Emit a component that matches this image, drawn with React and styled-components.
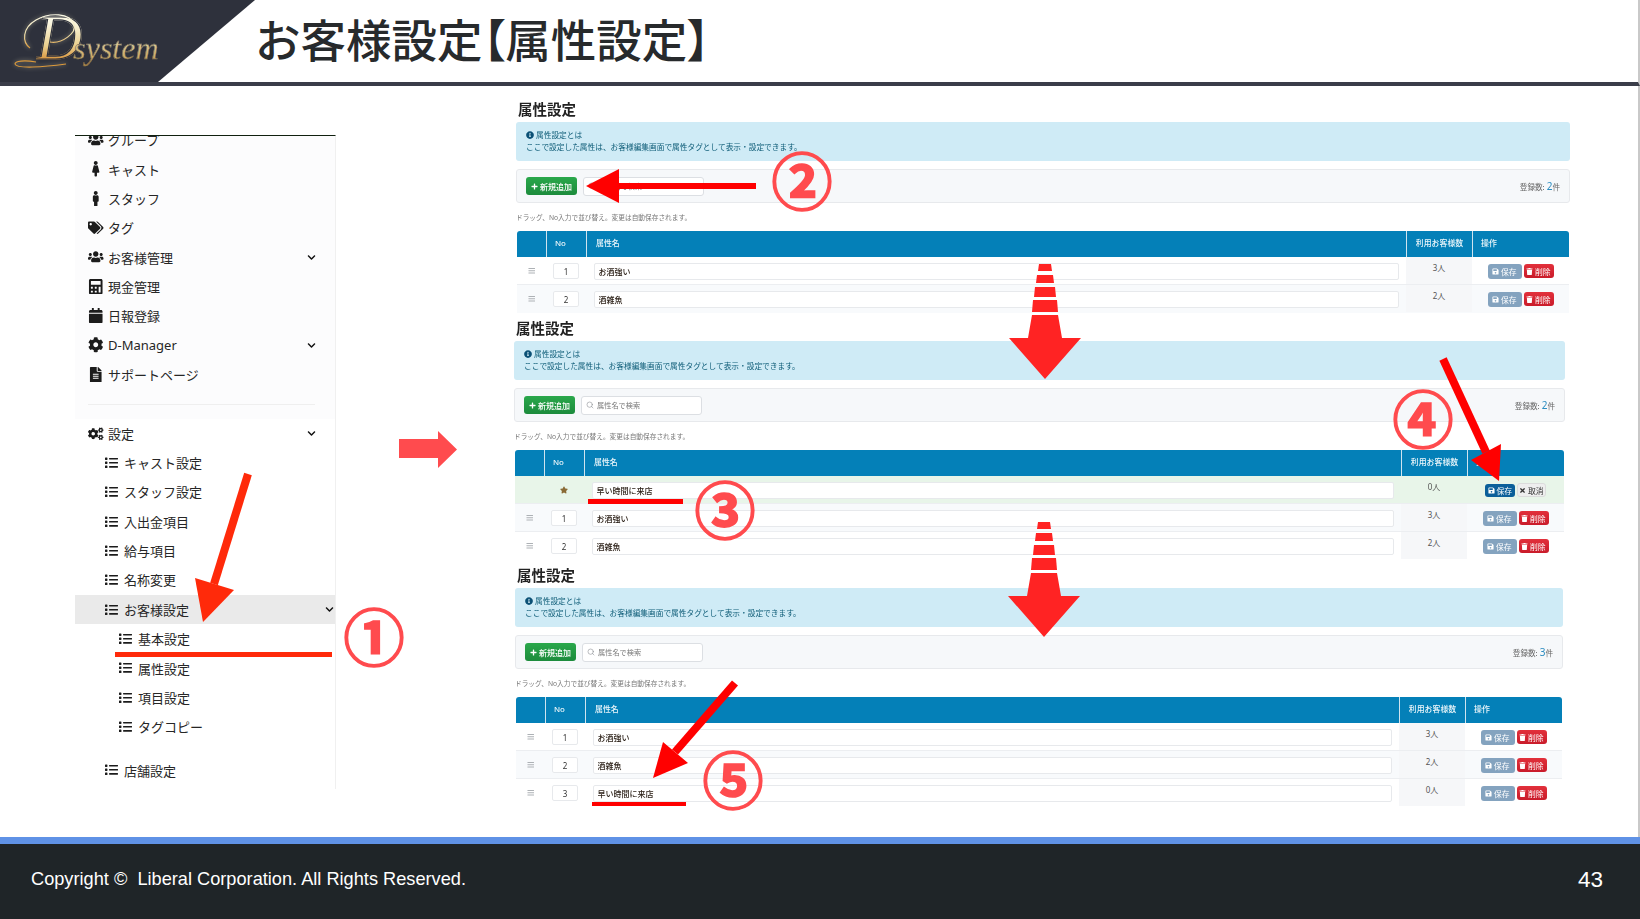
import React from "react";
import styled, { createGlobalStyle } from "styled-components";
import { Search } from "lucide-react";
import {
  FaUsers,
  FaFemale,
  FaMale,
  FaTags,
  FaCalculator,
  FaCalendar,
  FaCog,
  FaCogs,
  FaFileAlt,
  FaList,
  FaChevronDown,
  FaInfoCircle,
  FaPlus,
  FaSave,
  FaTrash,
  FaTimes,
  FaStar,
  FaBars,
} from "react-icons/fa";

const GlobalStyle = createGlobalStyle`
  html, body {
    margin: 0;
    padding: 0;
    background: #fff;
  }
  body {
    font-family: "Noto Sans", "Noto Sans CJK JP", sans-serif;
    color: #222;
  }
`;

const Page = styled.div`
  position: relative;
  width: 1640px;
  height: 919px;
  display: flex;
  flex-direction: column;
  overflow: hidden;
`;

const Header = styled.header`
  height: 82px;
  flex: none;
  display: flex;
  align-items: center;
  border-bottom: 4px solid #3a3d49;
  border-right: 2px solid #c9c9c9;
`;

const LogoPlate = styled.div`
  position: relative;
  width: 255px;
  height: 82px;
  flex: none;
  background: #2e313c;
  clip-path: polygon(0 0, 100% 0, 158px 100%, 0 100%);
`;

const LogoText = styled.div`
  display: flex;
  align-items: baseline;
  padding: 6px 0 0 36px;
  font-family: "Liberation Serif", serif;
  font-style: italic;
  line-height: 64px;
  height: 64px;
`;

const LogoD = styled.span`
  font-size: 64px;
  background: linear-gradient(180deg, #fbf8e4 25%, #e9cf8e 62%, #d8923a 85%);
  -webkit-background-clip: text;
  background-clip: text;
  color: transparent;
  -webkit-text-stroke: 1.2px #2e313c;
`;

const LogoRest = styled.span`
  font-size: 32px;
  margin-left: -9px;
  background: linear-gradient(180deg, #e2d6a8 35%, #c39443 80%);
  -webkit-background-clip: text;
  background-clip: text;
  color: transparent;
  -webkit-text-stroke: 0.4px #2e313c;
`;

const LogoSwash = styled.svg`
  position: absolute;
  inset: 0;
  width: 200px;
  height: 82px;
  filter: drop-shadow(0 0 2px rgba(255, 245, 200, 0.55));
`;

const PageTitle = styled.h1`
  margin: 0;
  font-size: 45.5px;
  font-weight: 500;
  line-height: 80px;
  height: 82px;
  color: #272a2c;
  white-space: nowrap;
`;

const Bracket = styled.span`
  font-feature-settings: "palt";
`;

const Body = styled.main`
  flex: 1;
  display: flex;
  align-items: flex-start;
  min-height: 0;
  border-right: 2px solid #c9c9c9;
`;

const Sidebar = styled.nav`
  width: 261px;
  height: 654px;
  margin: 49px 0 0 75px;
  flex: none;
  border-top: 1px solid #10200f;
  border-right: 1px solid #f0f0f0;
  box-sizing: border-box;
  overflow: hidden;
`;

const SideTop = styled.div`
  margin-top: -11px;
  padding-bottom: 13.5px;
  background: #fcfcfd;
`;

const SideRule = styled.hr`
  margin: 15px 20px 0 13px;
  border: 0;
  border-top: 1px solid #efefef;
`;

const NavRow = styled.div`
  display: flex;
  align-items: center;
  height: 29.35px;
  padding-left: ${(p) => [13, 30, 44][p.$level]}px;
  padding-right: ${(p) => (p.$active ? 1 : 19)}px;
  margin-top: ${(p) => p.$gap || 0}px;
  background: ${(p) => (p.$active ? "#eaeaea" : "transparent")};
  font-size: 13px;
  color: #262626;
  white-space: nowrap;
`;

const NavIcon = styled.span`
  display: flex;
  justify-content: center;
  width: ${(p) => (p.$level === 0 ? 16 : 13)}px;
  margin-right: ${(p) => (p.$level === 0 ? 4 : 6)}px;
  font-size: ${(p) => (p.$level === 0 ? 15.5 : 13.5)}px;
  color: #1c1c1c;
`;

const NavCaret = styled.span`
  display: flex;
  margin-left: auto;
  font-size: 9px;
  color: #111;
`;

const Main = styled.div`
  flex: 1;
  padding-top: 14px;
  min-width: 0;
`;

const Panel = styled.section`
  width: ${(p) => p.$width}px;
  margin-left: ${(p) => p.$left}px;
  margin-top: ${(p) => p.$top}px;
  filter: blur(0.25px);
`;

const PanelTitle = styled.h2`
  margin: 0 0 4px 2px;
  font-size: 14.5px;
  font-weight: 700;
  line-height: 18px;
  color: #222;
`;

const Notice = styled.div`
  box-sizing: border-box;
  height: 39px;
  padding: 7px 10px;
  background: #cfebf6;
  border-radius: 3px;
  font-size: 7.7px;
  line-height: 12px;
  color: #0f5d78;
`;

const NoticeHead = styled.div`
  display: flex;
  align-items: center;
  gap: 2px;
  svg {
    font-size: 8px;
    color: #0b5075;
  }
`;

const Toolbar = styled.div`
  box-sizing: border-box;
  height: 34px;
  margin-top: 8px;
  padding: 0 9px;
  display: flex;
  align-items: center;
  gap: 6px;
  background: #f6f8fa;
  border: 1px solid #e7e9ec;
  border-radius: 3px;
`;

const AddButton = styled.button`
  width: 51px;
  height: 18px;
  padding: 0;
  display: flex;
  align-items: center;
  justify-content: center;
  gap: 2px;
  border: 0;
  border-radius: 3px;
  background: linear-gradient(180deg, #2aa84b, #1c8b3c);
  color: #fff;
  font-family: inherit;
  font-size: 8px;
  font-weight: 500;
  svg {
    font-size: 7px;
  }
`;

const SearchBox = styled.label`
  box-sizing: border-box;
  width: 121px;
  height: 19px;
  padding: 0 4px;
  display: flex;
  align-items: center;
  gap: 3px;
  background: #fff;
  border: 1px solid #dcdfe3;
  border-radius: 3px;
  color: #80858a;
  svg {
    flex: none;
  }
`;

const SearchInput = styled.input`
  flex: 1;
  min-width: 0;
  padding: 0;
  border: 0;
  outline: 0;
  background: transparent;
  font-family: inherit;
  font-size: 7.2px;
  &::placeholder {
    color: #777;
    opacity: 1;
  }
`;

const Total = styled.div`
  margin-left: auto;
  font-size: 7.6px;
  color: #666;
  b {
    font-weight: 400;
    font-size: 10px;
    color: #2a8cc0;
    margin-left: 2px;
  }
`;

const Hint = styled.p`
  margin: 9px 0 7px;
  font-size: 6.7px;
  line-height: 12px;
  color: #777;
`;

const Table = styled.div`
  margin-left: 1px;
  margin-right: 1px;
`;

const grid = `
  display: grid;
  grid-template-columns: 29px 40px 1fr 66px 97px;
`;

const HeadRow = styled.div`
  ${grid}
  height: 26px;
  background: #0480b8;
  border-radius: 3px 3px 0 0;
  color: #eef7fb;
  font-size: 7.9px;
  font-weight: 500;
  line-height: 25px;
`;

const HeadCell = styled.div`
  padding-left: ${(p) => p.$pad || 0}px;
  text-align: ${(p) => p.$align || "left"};
  border-left: ${(p) => (p.$first ? "0" : "1px solid #cfe4ef")};
`;

const Row = styled.div`
  ${grid}
  height: 28px;
  box-sizing: border-box;
  background: ${(p) => (p.$fresh ? "#e8f5e9" : p.$alt ? "#f8fafc" : "#fff")};
  border-bottom: 1px solid ${(p) => (p.$last ? "transparent" : "#eceef1")};
`;

const Cell = styled.div`
  display: flex;
  align-items: center;
  justify-content: center;
  padding-top: 1px;
  box-sizing: border-box;
  min-width: 0;
`;

const Grip = styled(Cell)`
  font-size: 7.5px;
  color: #adb1b5;
`;

const NoBox = styled.input`
  box-sizing: border-box;
  width: 26px;
  height: 16px;
  padding: 0;
  border: 1px solid #e7e9ec;
  border-radius: 2px;
  background: #fff;
  text-align: center;
  font-family: inherit;
  font-size: 8px;
  color: #333;
`;

const NameBox = styled.input`
  box-sizing: border-box;
  width: calc(100% - 15px);
  height: 17px;
  padding: 0 4px;
  border: 1px solid #e7e9ec;
  border-radius: 2px;
  background: #fff;
  font-family: inherit;
  font-size: 8px;
  font-weight: 500;
  color: #2c2118;
`;

const CountCell = styled.div`
  padding-top: 5px;
  background: ${(p) => (p.$fresh ? "transparent" : "#f6f7f9")};
  text-align: center;
  font-size: 8px;
  line-height: 12px;
  color: #555;
`;

const Actions = styled(Cell)`
  gap: 2px;
`;

const RowButton = styled.button`
  height: ${(p) => (p.$tone === "blue" ? 13 : p.$tone === "save" ? 15 : 14)}px;
  width: ${(p) => ({ save: 34, del: 30, blue: 30, cancel: 29 })[p.$tone]}px;
  padding: 0;
  display: flex;
  align-items: center;
  justify-content: center;
  gap: 1.5px;
  border: ${(p) => (p.$tone === "cancel" ? "1px solid #dcdcdc" : "0")};
  border-radius: 3px;
  box-sizing: border-box;
  background: ${(p) =>
    ({
      save: "#84a3bf",
      del: "linear-gradient(180deg, #e2303b, #c91b2a)",
      blue: "#0b5f9a",
      cancel: "#eeeeee",
    })[p.$tone]};
  color: ${(p) => (p.$tone === "cancel" ? "#333" : "#fff")};
  font-family: inherit;
  font-size: 7.8px;
  svg {
    font-size: 7px;
  }
`;

const Footer = styled.footer`
  flex: none;
  height: 71px;
  padding: 0 37px 4px 31px;
  display: flex;
  align-items: center;
  justify-content: space-between;
  background: #1f2528;
  border-top: 7px solid #5f92e6;
  color: #fff;
  font-family: "Liberation Sans", Arial, sans-serif;
`;

const Copyright = styled.span`
  font-size: 18.2px;
  white-space: pre;
`;

const PageNo = styled.span`
  font-size: 22.5px;
`;

const Overlay = styled.svg`
  position: absolute;
  inset: 0;
  width: 1640px;
  height: 919px;
  pointer-events: none;
`;

const Mark = styled.span`
  position: absolute;
  left: ${(p) => p.$x}px;
  top: ${(p) => p.$y}px;
  transform: translate(-50%, -50%);
  font-family: "Noto Sans CJK JP", sans-serif;
  font-size: 61px;
  font-weight: 700;
  line-height: 1;
  color: #ff4b4e;
  -webkit-text-stroke: 1.6px #ff4b4e;
`;

const topNav = [
  [FaUsers, "グループ"],
  [FaFemale, "キャスト"],
  [FaMale, "スタッフ"],
  [FaTags, "タグ"],
  [FaUsers, "お客様管理", true],
  [FaCalculator, "現金管理"],
  [FaCalendar, "日報登録"],
  [FaCog, "D-Manager", true],
  [FaFileAlt, "サポートページ"],
];

const settingsNav = [
  { label: "設定", level: 0, icon: FaCogs, caret: true },
  { label: "キャスト設定", level: 1 },
  { label: "スタッフ設定", level: 1 },
  { label: "入出金項目", level: 1 },
  { label: "給与項目", level: 1 },
  { label: "名称変更", level: 1 },
  { label: "お客様設定", level: 1, caret: true, active: true },
  { label: "基本設定", level: 2 },
  { label: "属性設定", level: 2 },
  { label: "項目設定", level: 2 },
  { label: "タグコピー", level: 2 },
  { label: "店舗設定", level: 1, gap: 14 },
];

const panels = [
  {
    width: 1054,
    left: 180,
    top: 0,
    total: 2,
    rows: [
      { no: 1, name: "お酒強い", count: 3 },
      { no: 2, name: "酒雑魚", count: 2 },
    ],
  },
  {
    width: 1051,
    left: 178,
    top: 6,
    total: 2,
    rows: [
      { fresh: true, name: "早い時間に来店", count: 0 },
      { no: 1, name: "お酒強い", count: 3 },
      { no: 2, name: "酒雑魚", count: 2 },
    ],
  },
  {
    width: 1048,
    left: 179,
    top: 6,
    total: 3,
    rows: [
      { no: 1, name: "お酒強い", count: 3 },
      { no: 2, name: "酒雑魚", count: 2 },
      { no: 3, name: "早い時間に来店", count: 0 },
    ],
  },
];

const NavItem = ({ icon: Icon = FaList, label, level = 0, caret, active, gap }) => (
  <NavRow $level={level} $active={active} $gap={gap}>
    <NavIcon $level={level}>
      <Icon />
    </NavIcon>
    {label}
    {caret && (
      <NavCaret>
        <FaChevronDown />
      </NavCaret>
    )}
  </NavRow>
);

const TableRow = ({ row, alt, last }) => (
  <Row $fresh={row.fresh} $alt={alt} $last={last}>
    <Grip>{!row.fresh && <FaBars />}</Grip>
    <Cell>
      {row.fresh ? (
        <FaStar color="#8a6a35" size={8} />
      ) : (
        <NoBox readOnly value={row.no} />
      )}
    </Cell>
    <Cell>
      <NameBox readOnly value={row.name} />
    </Cell>
    <CountCell $fresh={row.fresh}>{row.count}人</CountCell>
    <Actions>
      <RowButton $tone={row.fresh ? "blue" : "save"}>
        <FaSave />
        保存
      </RowButton>
      {row.fresh ? (
        <RowButton $tone="cancel">
          <FaTimes />
          取消
        </RowButton>
      ) : (
        <RowButton $tone="del">
          <FaTrash />
          削除
        </RowButton>
      )}
    </Actions>
  </Row>
);

const AttributePanel = ({ width, left, top, total, rows }) => (
  <Panel $width={width} $left={left} $top={top}>
    <PanelTitle>属性設定</PanelTitle>
    <Notice>
      <NoticeHead>
        <FaInfoCircle />
        属性設定とは
      </NoticeHead>
      ここで設定した属性は、お客様編集画面で属性タグとして表示・設定できます。
    </Notice>
    <Toolbar>
      <AddButton>
        <FaPlus />
        新規追加
      </AddButton>
      <SearchBox>
        <Search size={8} strokeWidth={1.6} />
        <SearchInput placeholder="属性名で検索" />
      </SearchBox>
      <Total>
        登録数:<b>{total}</b>件
      </Total>
    </Toolbar>
    <Hint>ドラッグ、No入力で並び替え。変更は自動保存されます。</Hint>
    <Table>
      <HeadRow>
        <HeadCell $first />
        <HeadCell $pad={8}>No</HeadCell>
        <HeadCell $pad={9}>属性名</HeadCell>
        <HeadCell $align="center">利用お客様数</HeadCell>
        <HeadCell $pad={8}>操作</HeadCell>
      </HeadRow>
      {rows.map((row, i) => (
        <TableRow
          key={row.name}
          row={row}
          alt={i % 2 === 1}
          last={i === rows.length - 1}
        />
      ))}
    </Table>
  </Panel>
);

// dashed arrow pointing down between the panels
const DashArrow = ({ dx, dy }) => (
  <g transform={`translate(${dx} ${dy})`} fill="#ff2323">
    <polygon points="1039,264 1051,264 1052,271 1038,271" />
    <polygon points="1037,275 1053,275 1054,283 1036,283" />
    <polygon points="1035,287 1055,287 1056,297 1034,297" />
    <polygon points="1033,300 1057,300 1058,312 1032,312" />
    <polygon points="1032,315 1058,315 1062,338 1081,338 1045,379 1009,338 1028,338" />
  </g>
);

const Annotations = () => (
  <Overlay viewBox="0 0 1640 919">
    <polygon
      points="399,439 438,439 438,431 457,449.5 438,468 438,458 399,458"
      fill="#ff4b4e"
    />
    <g fill="#ff2a0a" stroke="none">
      <line x1="248" y1="474" x2="214" y2="584" stroke="#ff2a0a" strokeWidth="8" />
      <polygon points="195,578 234,590 203,622" />
      <rect x="115" y="652" width="217" height="5" />
    </g>
    <g fill="#ff0000">
      <line x1="756" y1="186" x2="615" y2="186" stroke="#ff0000" strokeWidth="6" />
      <polygon points="619,169 619,203 586,186" />
      <rect x="588" y="499" width="95" height="5" />
      <line x1="1443" y1="359" x2="1486" y2="452" stroke="#ff0000" strokeWidth="8" />
      <polygon points="1471,460 1501,444 1499,481" />
      <line x1="735" y1="683" x2="675" y2="752" stroke="#ff0000" strokeWidth="8" />
      <polygon points="663,742 688,763 653,778" />
      <rect x="592" y="802" width="94" height="4" />
    </g>
    <DashArrow dx={0} dy={0} />
    <DashArrow dx={-1} dy={258} />
  </Overlay>
);

const App = () => (
  <Page>
    <GlobalStyle />
    <Header>
      <LogoPlate>
        <LogoText>
          <LogoD>D</LogoD>
          <LogoRest>system</LogoRest>
        </LogoText>
        <LogoSwash viewBox="0 0 200 82">
          <defs>
            <linearGradient id="swash" x1="0" y1="0" x2="0" y2="1">
              <stop offset="0" stopColor="#fbf9e6" />
              <stop offset="0.6" stopColor="#efe0ab" />
              <stop offset="1" stopColor="#dc9a3c" />
            </linearGradient>
          </defs>
          <path
            d="M30 48C22 42 22 28 36 20C50 12 70 13 74 24C77 33 62 44 50 42"
            fill="none"
            stroke="url(#swash)"
            strokeWidth="1.2"
          />
          <path
            d="M36 62C24 60 15 61 15 64C16 69 44 67 66 64"
            fill="none"
            stroke="#dc9a3c"
            strokeWidth="1.2"
          />
        </LogoSwash>
      </LogoPlate>
      <PageTitle>
        お客様設定<Bracket>【</Bracket>属性設定<Bracket>】</Bracket>
      </PageTitle>
    </Header>
    <Body>
      <Sidebar>
        <SideTop>
          {topNav.map(([icon, label, caret]) => (
            <NavItem key={label} icon={icon} label={label} caret={caret} />
          ))}
          <SideRule />
        </SideTop>
        {settingsNav.map((item) => (
          <NavItem key={item.label} {...item} />
        ))}
      </Sidebar>
      <Main>
        {panels.map((panel, i) => (
          <AttributePanel key={i} {...panel} />
        ))}
      </Main>
    </Body>
    <Footer>
      <Copyright>Copyright ©  Liberal Corporation. All Rights Reserved.</Copyright>
      <PageNo>43</PageNo>
    </Footer>
    <Annotations />
    <Mark $x={374} $y={634}>①</Mark>
    <Mark $x={802} $y={178}>②</Mark>
    <Mark $x={725} $y={507}>③</Mark>
    <Mark $x={1423} $y={416}>④</Mark>
    <Mark $x={733} $y={777}>⑤</Mark>
  </Page>
);

export default App;
